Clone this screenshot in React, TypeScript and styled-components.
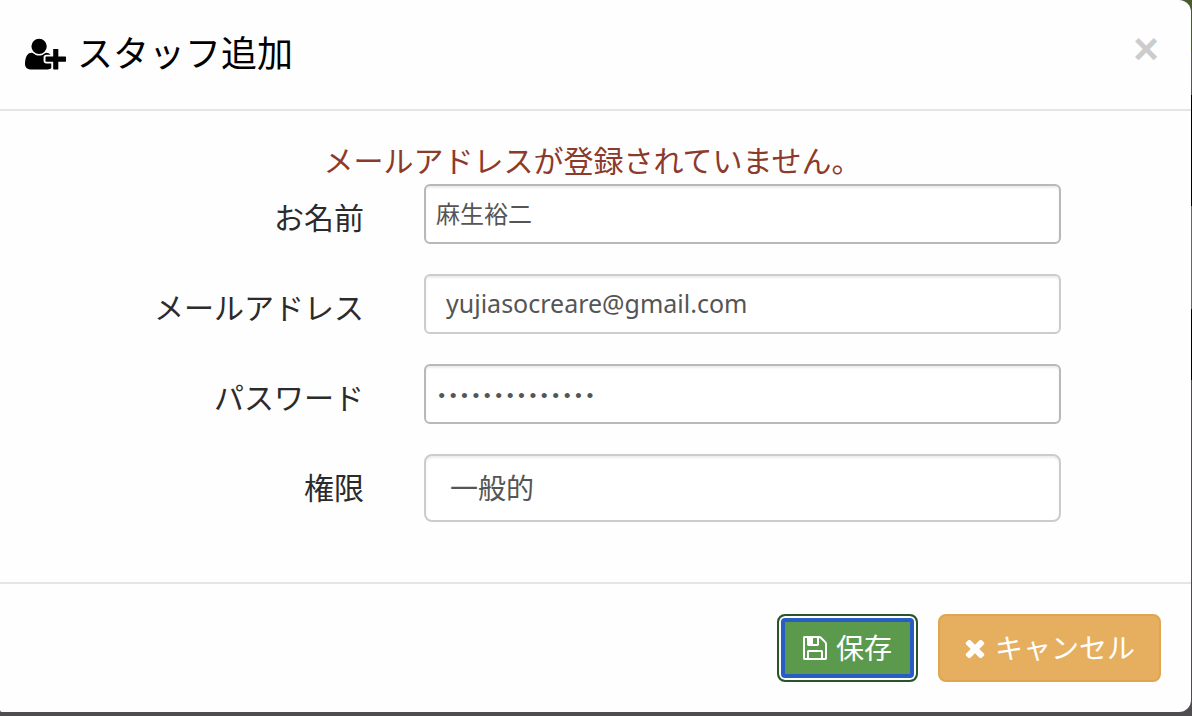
import React from "react";
import styled, { createGlobalStyle } from "styled-components";

const GlobalStyle = createGlobalStyle`
  *, *::before, *::after { box-sizing: border-box; }
  body {
    margin: 0;
    background: #4f4d4f;
    color: #333;
    font-family: "Noto Sans", "Noto Sans CJK JP", sans-serif;
  }
  button, input, select { font-family: inherit; }
`;

const Backdrop = styled.div`
  min-height: 100vh;
  padding: 0 1px 4px 0;
  background: linear-gradient(#4a5a2c 0 52px, #555 52px 95px, #000 95px 206px, #666 206px 309px, #000 309px 380px, #4f4d4f 380px);
`;

const Dialog = styled.section`
  background: #fefefe;
  border-radius: 0 12px 12px 2px;
`;

const Header = styled.header`
  display: flex;
  align-items: flex-start;
  justify-content: space-between;
  padding: 28px 32px 29px 25px;
  border-bottom: 2px solid #e5e5e5;
`;

const Title = styled.h1`
  display: flex;
  align-items: center;
  gap: 11px;
  margin: 0;
  font-size: 36px;
  font-weight: 400;
  line-height: 52px;
  color: #000;
`;

const CloseButton = styled.button`
  padding: 0;
  border: 0;
  background: none;
  color: #ccc;
  font: bold 44px/42px "Liberation Sans", sans-serif;
  cursor: pointer;
`;

const Form = styled.form`
  margin: 0;
`;

const Body = styled.div`
  padding: 30px 0 60px;
`;

const Alert = styled.p`
  margin: 0 0 4px;
  padding-right: 6px;
  color: #8c3a2b;
  font-size: 30px;
  line-height: 39px;
  text-align: center;
`;

const Fields = styled.div`
  display: grid;
  gap: 30px;
  padding-right: 130px;
`;

const Row = styled.div`
  display: grid;
  grid-template-columns: 4fr 7fr;
  column-gap: 60px;
`;

const Label = styled.label`
  padding-top: 14px;
  color: #2b2b2b;
  font-size: 30px;
  line-height: 40px;
  text-align: right;
`;

const Input = styled.input<{ $wide?: boolean }>`
  width: 100%;
  height: 60px;
  padding: 0 ${(p) => (p.$wide ? 20 : 10)}px 3px;
  border: 2px solid ${(p) => (p.$wide ? "#ccc" : "#b8b8b8")};
  border-radius: 6px;
  outline: 0;
  background: #fff;
  box-shadow: inset 0 2px 2px rgba(0, 0, 0, 0.075);
  color: #555;
  font-size: ${(p) => (p.$wide ? 25 : 24)}px;
`;

const PasswordInput = styled(Input)`
  && { font-family: "Liberation Mono", monospace; }
  padding: 6px 10px 0;
  font-size: 19px;
`;

const Select = styled.select`
  width: 100%;
  height: 68px;
  padding: 0 24px;
  border: 2px solid #ccc;
  border-radius: 8px;
  outline: 0;
  appearance: none;
  background: #fff;
  box-shadow: inset 0 2px 2px rgba(0, 0, 0, 0.075);
  color: #555;
  font-size: 28px;
`;

const Footer = styled.footer`
  display: flex;
  justify-content: flex-end;
  gap: 20px;
  padding: 30px;
  border-top: 2px solid #e5e5e5;
`;

const Button = styled.button<{ $kind: "save" | "cancel" }>`
  display: flex;
  align-items: center;
  gap: 9px;
  height: 68px;
  padding: 0 24px;
  border: 2px solid ${(p) => (p.$kind === "save" ? "#255625" : "#dfa550")};
  border-radius: 8px;
  background: ${(p) => (p.$kind === "save" ? "#5b9a4d" : "#e6af5f")};
  box-shadow: ${(p) => (p.$kind === "save" ? "inset 0 0 0 2px #fff, inset 0 0 0 6px #275dc5" : "none")};
  color: #fff;
  font-size: 28px;
  line-height: 40px;
  white-space: nowrap;
  cursor: pointer;
`;

const Icon = styled.svg`
  flex: none;
  fill: currentColor;
`;

const UserPlusIcon = () => (
  <Icon width="41" height="36" viewBox="0 0 2048 1792" aria-hidden="true">
    <path d="M704 896q-159 0-271.500-112.500t-112.500-271.500 112.500-271.500 271.500-112.500 271.500 112.500 112.500 271.500-112.500 271.500-271.500 112.500zm960 128h352q13 0 22.500 9.500t9.500 22.500v192q0 13-9.500 22.500t-22.500 9.500h-352v352q0 13-9.500 22.500t-22.500 9.500h-192q-13 0-22.500-9.500t-9.500-22.500v-352h-352q-13 0-22.500-9.500t-9.500-22.500v-192q0-13 9.500-22.500t22.500-9.500h352v-352q0-13 9.500-22.500t22.500-9.500h192q13 0 22.500 9.500t9.500 22.500v352zm-736 224q0 52 38 90t90 38h256v238q-68 50-171 50h-874q-121 0-194-69t-73-190q0-53 3.500-103.500t14-109 26.500-108.500 43-97.500 62-81 85.500-53.500 111.500-20q19 0 39 17 79 61 154.500 91.500t164.500 30.500 164.500-30.500 154.500-91.500q20-17 39-17 132 0 217 96h-223q-52 0-90 38t-38 90v192z" />
  </Icon>
);

const SaveIcon = () => (
  <Icon width="24" height="28" viewBox="128 0 1536 1792" aria-hidden="true">
    <path d="M512 1536h768v-384h-768v384zm896 0h128v-896q0-14-10-38.500t-20-34.500l-281-281q-10-10-34-20t-39-10v416q0 40-28 68t-68 28h-576q-40 0-68-28t-28-68v-416h-128v1280h128v-416q0-40 28-68t68-28h832q40 0 68 28t28 68v416zm-384-928v-320q0-13-9.500-22.500t-22.500-9.500h-192q-13 0-22.500 9.500t-9.500 22.500v320q0 13 9.500 22.500t22.500 9.500h192q13 0 22.500-9.500t9.500-22.500zm640 32v928q0 40-28 68t-68 28h-1344q-40 0-68-28t-28-68v-1344q0-40 28-68t68-28h928q40 0 88 20t76 48l280 280q28 28 48 76t20 88z" />
  </Icon>
);

const TimesIcon = () => (
  <Icon width="22" height="28" viewBox="192 0 1408 1792" aria-hidden="true">
    <path d="M1490 1322q0 40-28 68l-136 136q-28 28-68 28t-68-28l-294-294-294 294q-28 28-68 28t-68-28l-136-136q-28-28-28-68t28-68l294-294-294-294q-28-28-28-68t28-68l136-136q28-28 68-28t68 28l294 294 294-294q28-28 68-28t68 28l136 136q28 28 28 68t-28 68l-294 294 294 294q28 28 28 68z" />
  </Icon>
);

export default function App() {
  return (
    <Backdrop>
      <GlobalStyle />
      <Dialog role="dialog" aria-labelledby="dialog-title">
        <Header>
          <Title id="dialog-title">
            <UserPlusIcon />
            スタッフ追加
          </Title>
          <CloseButton type="button" aria-label="閉じる">×</CloseButton>
        </Header>
        <Form onSubmit={(e) => e.preventDefault()}>
          <Body>
            <Alert role="alert">メールアドレスが登録されていません。</Alert>
            <Fields>
              <Row>
                <Label htmlFor="name">お名前</Label>
                <Input id="name" type="text" defaultValue="麻生裕二" />
              </Row>
              <Row>
                <Label htmlFor="email">メールアドレス</Label>
                <Input id="email" type="email" $wide defaultValue="yujiasocreare@gmail.com" />
              </Row>
              <Row>
                <Label htmlFor="password">パスワード</Label>
                <PasswordInput id="password" type="password" defaultValue="abcdefghijklmn" />
              </Row>
              <Row>
                <Label htmlFor="role">権限</Label>
                <Select id="role" defaultValue="general">
                  <option value="general">一般的</option>
                </Select>
              </Row>
            </Fields>
          </Body>
          <Footer>
            <Button type="submit" $kind="save">
              <SaveIcon />
              保存
            </Button>
            <Button type="button" $kind="cancel">
              <TimesIcon />
              キャンセル
            </Button>
          </Footer>
        </Form>
      </Dialog>
    </Backdrop>
  );
}
